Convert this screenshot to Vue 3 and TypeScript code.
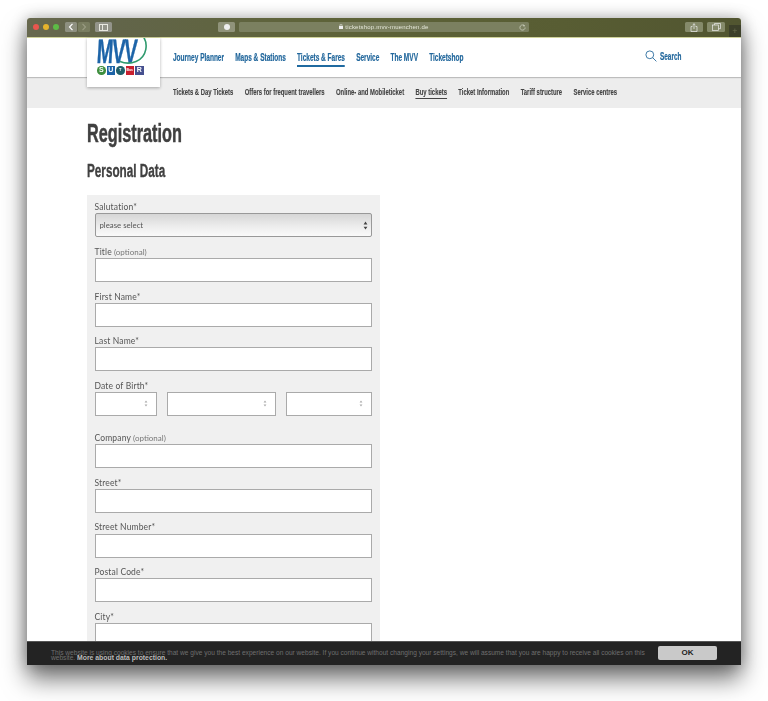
<script setup lang="ts">
const mainNav: string[] = ['Journey Planner', 'Maps & Stations', 'Tickets & Fares', 'Service', 'The MVV', 'Ticketshop']
const subNav: string[] = ['Tickets & Day Tickets', 'Offers for frequent travellers', 'Online- and Mobileticket', 'Buy tickets', 'Ticket Information', 'Tariff structure', 'Service centres']
const before = [{ label: 'Title', opt: true }, { label: 'First Name*' }, { label: 'Last Name*' }]
const after = [{ label: 'Company', opt: true }, { label: 'Street*' }, { label: 'Street Number*' }, { label: 'Postal Code*' }, { label: 'City*' }]
const dobWidths: number[] = [62, 109, 86]
</script>

<template>
  <div class="stage">
    <div class="window">
      <div class="content">
        <header class="titlebar">
          <div class="lights"><i class="red"></i><i class="yellow"></i><i class="green"></i></div>
          <div class="navbtns">
            <span class="tb back"><svg width="6" height="8" viewBox="0 0 6 8"><path d="M4.500 .8 1.500 4l3 3.200" fill="none" stroke="#fff" stroke-width="1.2"/></svg></span>
            <span class="tb fwd"><svg width="6" height="8" viewBox="0 0 6 8"><path d="M1.500 .8 4.500 4l-3 3.200" fill="none" stroke="#9a9c82" stroke-width="1.2"/></svg></span>
          </div>
          <span class="tb side"><svg width="9" height="7" viewBox="0 0 9 7"><rect x=".5" y=".5" width="8" height="6" fill="none" stroke="#e8e8e0"/><path d="M3.500 .5v6" stroke="#e8e8e0"/></svg></span>
          <span class="tb fav"><i></i></span>
          <div class="url">
            <span class="urltext"><svg width="4" height="5" viewBox="0 0 4 5"><rect y="2" width="4" height="3" fill="#eee"/><path d="M1 2V1a1 1 0 0 1 2 0v1" fill="none" stroke="#eee" stroke-width=".6"/></svg> ticketshop.mvv-muenchen.de</span>
            <svg class="reload" width="7" height="7" viewBox="0 0 7 7"><path d="M5.600 2a2.600 2.600 0 1 0 .5 1.500" fill="none" stroke="#d6d8c8" stroke-width=".7"/><path d="M4.600 .6 6 2 4.300 2.600z" fill="#d6d8c8"/></svg>
          </div>
          <span class="tb share"><svg width="8" height="9" viewBox="0 0 8 9"><path d="M2.500 3.500H1v5h6v-5H5.500M4 6V.8M2.600 2 4 .7 5.400 2" fill="none" stroke="#eee" stroke-width=".7"/></svg></span>
          <span class="tb tabs"><svg width="9" height="8" viewBox="0 0 9 8"><rect x=".5" y="2" width="6" height="5.500" fill="none" stroke="#eee" stroke-width=".7"/><path d="M2.500 2V.5h6v5.200H6.500" fill="none" stroke="#eee" stroke-width=".7"/></svg></span>
          <span class="plus">+</span>
        </header>

        <div class="topnav">
          <div class="logo">
            <div class="mark">
              <span class="mvv">MVV</span>
              <svg class="swoosh" width="73" height="30" viewBox="0 0 73 30"><path d="M55 -3C62 5 60 19 49 23.500 44 25.500 38 25.500 33 23.500" fill="none" stroke="#2f9a6e" stroke-width="1.6"/></svg>
            </div>
            <div class="modes">
              <span class="m s">S</span><span class="m u">U</span><span class="m t">T</span><span class="m b">Bus</span><span class="m r">R</span>
            </div>
          </div>
          <nav class="mainnav">
            <a v-for="n in mainNav" :key="n" :class="{ active: n === 'Tickets & Fares' }">{{ n }}</a>
          </nav>
          <div class="search">
            <svg width="12" height="12" viewBox="0 0 12 12"><circle cx="4.800" cy="4.800" r="3.900" fill="none" stroke="#2a6c9e" stroke-width=".9"/><path d="m7.600 7.600 3.800 3.800" stroke="#2a6c9e" stroke-width=".9"/></svg>
            <span>Search</span>
          </div>
        </div>

        <div class="subbar">
          <nav class="subnav">
            <a v-for="n in subNav" :key="n" :class="{ active: n === 'Buy tickets' }">{{ n }}</a>
          </nav>
        </div>

        <main class="page">
          <h1>Registration</h1>
          <h2>Personal Data</h2>
          <form class="panel">
            <div class="field first">
              <label>Salutation*</label>
              <div class="select">
                <span>please select</span>
                <svg width="5" height="9" viewBox="0 0 4 8"><path d="M2 .5 3.700 3H.3zM2 7.500.3 5h3.400z" fill="#444"/></svg>
              </div>
            </div>
            <div v-for="f in before" :key="f.label" class="field">
              <label>{{ f.label }}<small v-if="f.opt"> (optional)</small></label>
              <input type="text" />
            </div>
            <div class="field dob">
              <label>Date of Birth*</label>
              <div class="dobrow">
                <div v-for="w in dobWidths" :key="w" class="spin" :style="{ width: w + 'px' }">
                  <svg width="4" height="7" viewBox="0 0 4 7"><path d="M2 .6 3.400 2.400H.6zM2 6.400.6 4.600h2.800z" fill="#aaa"/></svg>
                </div>
              </div>
            </div>
            <div v-for="f in after" :key="f.label" class="field">
              <label>{{ f.label }}<small v-if="f.opt"> (optional)</small></label>
              <input type="text" />
            </div>
          </form>
        </main>

        <div class="cookie">
          <p>This website is using cookies to ensure that we give you the best experience on our website. If you continue without changing your settings, we will assume that you are happy to receive all cookies on this website. <b>More about data protection.</b></p>
          <button type="button">OK</button>
        </div>
      </div>
    </div>
  </div>
</template>

<style>
html, body { margin: 0; background: #fff; }
</style>

<style scoped>
.stage {
  width: 768px;
  height: 701px;
  box-sizing: border-box;
  padding: 18px 27px 36px;
  overflow: hidden;
  background: #fff;
}
.window {
  width: 714px;
  height: 647px;
  box-shadow: 0 14px 24px rgba(0, 0, 0, .55), 0 0 15px rgba(0, 0, 0, .28);
  border-radius: 3px 3px 0 0;
}
.content {
  position: relative;
  height: 100%;
  overflow: hidden;
  background: #fff;
  filter: blur(.45px);
  border-radius: 3px 3px 0 0;
  font-family: "Liberation Sans", sans-serif;
}
.titlebar {
  height: 20px;
  box-sizing: border-box;
  display: flex;
  align-items: center;
  padding: 0 0 1px 6px;
  background: linear-gradient(90deg, #67684e 0, #62654a 12%, #5e6339 40%, #585d33 75%, #515530 100%);
  border-bottom: 1px solid #cfd29a;
}
.lights { display: flex; gap: 3.8px; width: 32px; }
.lights i { width: 6px; height: 6px; border-radius: 50%; }
.red { background: #e9564e; }
.yellow { background: #e6b32c; }
.green { background: #5dbb46; }
.navbtns { display: flex; gap: 1px; width: 30px; }
.tb {
  display: flex;
  align-items: center;
  justify-content: center;
  height: 10.5px;
  border-radius: 1.5px;
  background: #878a72;
}
.back { width: 12px; background: #8e9080; }
.fwd { width: 12px; background: #797d60; }
.side { width: 17px; background: #93948a; }
.fav { width: 17px; margin-left: 106px; background: #90937a; }
.fav i { width: 6px; height: 6px; border-radius: 50%; background: #eee; }
.url {
  position: relative;
  width: 290px;
  height: 10.5px;
  margin-left: 4px;
  border-radius: 1.5px;
  background: #7b8060;
  display: flex;
  align-items: center;
  justify-content: center;
}
.urltext { font: 6px/10px "Liberation Sans", sans-serif; color: #e6e8da; letter-spacing: .2px; }
.reload { position: absolute; right: 3px; top: 2px; }
.share { width: 18px; margin-left: 156px; background: #858a6a; }
.tabs { width: 18px; margin-left: 4px; background: #858a6a; }
.plus {
  width: 12px;
  height: 12px;
  margin: 5px 0 -2px 4px;
  background: #3d402a;
  color: #6a6e50;
  font: 9px/12px "Liberation Sans", sans-serif;
  text-align: center;
}
.topnav {
  position: relative;
  height: 39px;
  box-sizing: border-box;
  display: flex;
  align-items: center;
  padding: 0 0 2px 146px;
  background: #fff;
  box-shadow: 0 1px 1px rgba(0, 0, 0, .2);
  z-index: 1;
}
.logo {
  position: absolute;
  left: 60px;
  top: 0;
  width: 73px;
  height: 49px;
  background: #fff;
  box-shadow: 0 1px 3px rgba(0, 0, 0, .3);
  overflow: hidden;
  z-index: 2;
}
.mark { position: relative; height: 26px; }
.mvv {
  position: absolute;
  left: 10px;
  top: -2px;
  font: bold 34px/30px "Liberation Sans", sans-serif;
  letter-spacing: -2px;
  color: #1d64a8;
  -webkit-text-stroke: .4px #1d64a8;
  transform: scaleX(.58) skewX(-6deg);
  transform-origin: left center;
}
.swoosh { position: absolute; left: 0; top: 0; overflow: visible; }
.modes { display: flex; gap: 1px; padding-left: 10px; margin-top: 2px; align-items: center; }
.m {
  width: 8.5px;
  height: 8.5px;
  font: bold 7px/8.5px "Liberation Sans", sans-serif;
  color: #fff;
  text-align: center;
}
.s { border-radius: 50%; background: #3f8f3f; }
.u { background: #1d64a8; }
.t { border-radius: 50%; background: #1f5f6a; font-size: 4px; }
.b { background: #c8202f; font-size: 3.5px; }
.r { background: #46508f; }
.mainnav {
  display: flex;
  flex: none;
  gap: 18px;
  align-items: center;
  transform: scaleX(.62);
  transform-origin: left center;
}
.mainnav a {
  padding: 4px 0 2px;
  border-bottom: 2px solid transparent;
  font-size: 10.5px;
  line-height: 12px;
  font-weight: 700;
  color: #22679c;
  -webkit-text-stroke: .2px #22679c;
  white-space: nowrap;
}
.mainnav a.active { border-bottom-color: #1f6aa0; }
.search {
  position: absolute;
  left: 618px;
  top: 12px;
  display: flex;
  align-items: center;
  gap: 3px;
  font-size: 10.5px;
  font-weight: 700;
  color: #22679c;
  -webkit-text-stroke: .2px #22679c;
}
.search span { display: inline-block; transform: scaleX(.61); transform-origin: left center; }
.subbar {
  height: 31px;
  box-sizing: border-box;
  display: flex;
  align-items: center;
  padding: 0 0 2px 146px;
  background: #ededed;
}
.subnav {
  display: flex;
  flex: none;
  align-items: center;
  gap: 18.4px;
  transform: scaleX(.62);
  transform-origin: left center;
}
.subnav a {
  padding: 2px 0 1px;
  border-bottom: 1px solid transparent;
  font-size: 9.5px;
  line-height: 11px;
  font-weight: 700;
  color: #444;
  -webkit-text-stroke: .15px #444;
  white-space: nowrap;
}
.subnav a.active { border-bottom-color: #444; }
.page { padding: 0 0 0 60px; }
h1 {
  margin: 10px 0 0;
  font-size: 25px;
  line-height: 30px;
  font-weight: 700;
  color: #404040;
  -webkit-text-stroke: .5px #404040;
  transform: scaleX(.65);
  transform-origin: left center;
}
h2 {
  margin: 11px 0 0;
  font-size: 17.5px;
  line-height: 24px;
  font-weight: 700;
  color: #404040;
  -webkit-text-stroke: .35px #404040;
  transform: scaleX(.67);
  transform-origin: left center;
}
.panel {
  width: 293px;
  box-sizing: border-box;
  margin-top: 12px;
  padding: 6px 8px 20px 7.5px;
  background: #f0f0f0;
  font-family: Lato, "Open Sans", sans-serif;
}
.field { display: flex; flex-direction: column; height: 44.6px; }
.field label {
  height: 12px;
  margin-bottom: .2px;
  font-size: 8.5px;
  line-height: 12px;
  letter-spacing: .15px;
  color: #555;
  white-space: nowrap;
}
.field small { font-size: 8px; color: #777; letter-spacing: 0; }
.field.first { height: 45px; }
.field.dob { height: 52.4px; }
.field input, .spin {
  box-sizing: border-box;
  height: 24px;
  width: 277px;
  margin: 0;
  border: 1px solid #aaa;
  border-radius: 0;
  background: #fff;
  outline: none;
}
.select {
  box-sizing: border-box;
  height: 24px;
  width: 277px;
  display: flex;
  align-items: center;
  justify-content: space-between;
  padding: 0 3px 0 4px;
  border: 1px solid #999;
  border-radius: 2px;
  background: linear-gradient(#d6d6d6, #ececec 55%, #fafafa);
  font-size: 7.8px;
  color: #555;
}
.dobrow { display: flex; gap: 10px; }
.spin {
  display: flex;
  align-items: center;
  justify-content: flex-end;
  padding-right: 8px;
}
.cookie {
  position: absolute;
  left: 0;
  right: 0;
  bottom: 0;
  height: 24px;
  box-sizing: border-box;
  display: flex;
  align-items: center;
  padding: 0 24px;
  background: #232323;
  border-top: 1px solid #555;
  font-family: "Liberation Sans", sans-serif;
}
.cookie p {
  width: 600px;
  margin: 0;
  padding-top: 5px;
  font-size: 6.6px;
  line-height: 4.6px;
  color: #6f6f6f;
}
.cookie b { font-size: 6.85px; color: #bcbcbc; }
.cookie button {
  width: 59px;
  height: 14px;
  margin: 0 0 2px 7px;
  padding: 0;
  border: 0;
  border-radius: 2px;
  background: #c9c9c9;
  color: #222;
  font: bold 8px/14px "Liberation Sans", sans-serif;
}
</style>
